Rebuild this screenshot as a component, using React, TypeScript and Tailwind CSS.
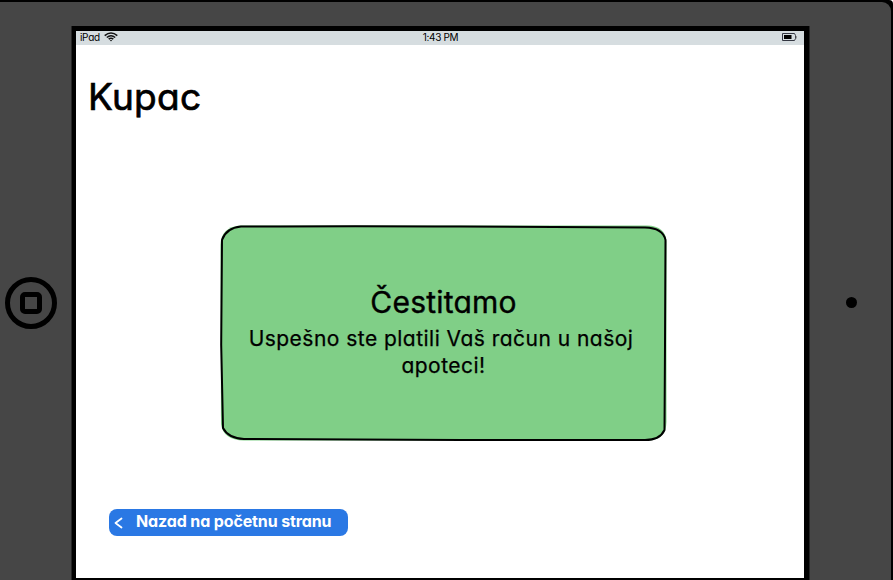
import React from 'react';

function WifiIcon() {
  return (
    <svg width="14" height="10" viewBox="0 0 14 10" fill="none" stroke="#111" strokeWidth="1.6">
      <path d="M.7 3.6Q7-1.6 13.3 3.6M2.8 5.5Q7 2 11.2 5.5M4.7 7.2Q7 5.3 9.3 7.2" />
      <path d="M5.8 8 7 9.500 8.200 8Z" fill="#111" stroke="none" />
    </svg>
  );
}

function BatteryIcon() {
  return (
    <svg width="15" height="8" viewBox="0 0 15 8" fill="none">
      <path d="M.5.5H12.500L13.500 2.500V5.500L12.500 7.500H.5Z" stroke="#333641" />
      <path d="M2 2H9.500V6H2Z" fill="#000" />
      <path d="M14 3V5.500" stroke="#555" />
    </svg>
  );
}

function StatusBar() {
  return (
    <div className="grid h-[14px] shrink-0 grid-cols-3 items-start bg-[#d6dde0] pl-1 pr-[7px] text-[10px] leading-[12px]">
      <div className="flex items-center gap-1">
        <span className="w-5 whitespace-nowrap tracking-[-0.3px]">iPad</span>
        <WifiIcon />
      </div>
      <span className="whitespace-nowrap pl-1 text-center tracking-[-0.3px]">1:43 PM</span>
      <div className="flex justify-end pt-[2px]">
        <BatteryIcon />
      </div>
    </div>
  );
}

function SuccessCard() {
  return (
    <section className="ml-36 mt-[104px] grid h-[216px] w-[447px] shrink-0">
      <svg className="col-start-1 row-start-1" width="447" height="216" viewBox="0 0 447 216" fill="none">
        <path d="M20 .5H427Q446 1 446.500 17V197Q446 215.500 427 215.500H24Q3 215 1 199L.5 20Q1 2 20 .5Z" fill="#80cf87" />
        <path d="M21 1.500Q140 .8 240 1.500L425 2.500Q443 3 445.500 15L445 120L444.500 205Q440 215 425 215L240 215L24 214Q8 213 3 203L1.200 120L2 15Q6 3 21 1.500Z" stroke="#000" strokeWidth="2" strokeLinejoin="round" />
      </svg>
      <div className="col-start-1 row-start-1 flex flex-col items-center pt-[58px]">
        <h2 className="whitespace-nowrap text-[30px] leading-[38px] tracking-[0.2px] [-webkit-text-stroke:0.4px_#000]">Čestitamo</h2>
        <p className="mt-[4px] whitespace-nowrap pr-[5px] text-center text-[21px] leading-[27px] tracking-[0.47px] [-webkit-text-stroke:0.25px_#000]">
          Uspešno ste platili Vaš račun u našoj
          <br />
          <span className="pl-[5px]">apoteci!</span>
        </p>
      </div>
    </section>
  );
}

function BackButton() {
  return (
    <button className="ml-[33px] mt-[68px] flex h-[27px] w-[239px] shrink-0 items-center rounded-[8px] bg-[#2a78e4] pl-[5px] text-white">
      <svg width="9" height="12" viewBox="0 0 9 12" fill="none" stroke="currentColor" strokeWidth="1.8" strokeLinecap="round" strokeLinejoin="round">
        <path d="M7.500 1.500 1.500 6 7.500 10.500" />
      </svg>
      <span className="ml-[13px] whitespace-nowrap pb-[3px] text-[16px] font-bold leading-5 tracking-[-0.13px]">Nazad na početnu stranu</span>
    </button>
  );
}

export default function App() {
  return (
    <div className="h-[580px] w-[893px] overflow-hidden bg-white font-['Inter',sans-serif] text-black [font-feature-settings:'cv11'_1]">
      <div className="flex h-full rounded-tr-[4px] bg-black pr-[2px] pt-[2px]">
        <div className="flex h-full w-full rounded-tr-[9px] bg-[#464646]">
          <aside className="flex w-[71px] shrink-0 pl-[5px] pt-[275px]">
            <div className="flex h-[52px] w-[52px] items-center justify-center rounded-full border-[5px] border-black">
              <div className="h-[22px] w-[22px] rounded-[5px] border-[5px] border-black" />
            </div>
          </aside>
          <div className="mt-6 w-[739px] shrink-0 border-x border-[#252525] bg-black px-1 pt-[5px]">
            <main className="flex h-[547px] w-[728px] flex-col bg-white">
              <StatusBar />
              <h1 className="ml-[12px] mt-[28px] h-[48px] whitespace-nowrap text-[37px] leading-[48px] tracking-[0.3px] [-webkit-text-stroke:0.7px_#000]">Kupac</h1>
              <SuccessCard />
              <BackButton />
            </main>
          </div>
          <aside className="pl-9 pt-[295px]">
            <div className="h-[11px] w-[11px] rounded-full bg-black" />
          </aside>
        </div>
      </div>
    </div>
  );
}
